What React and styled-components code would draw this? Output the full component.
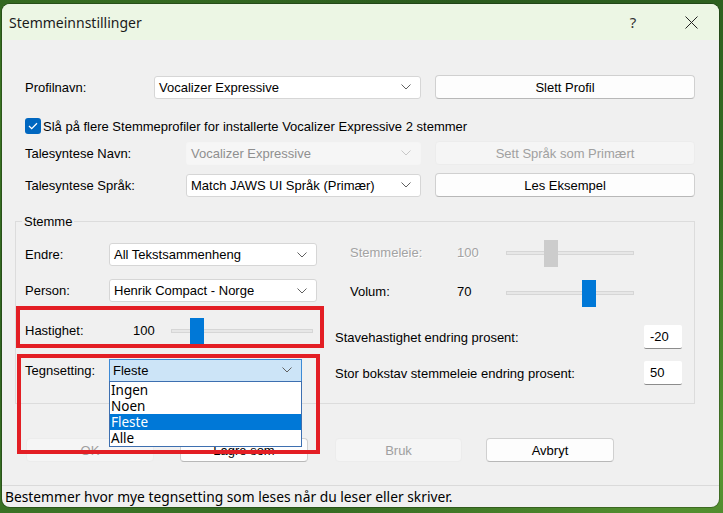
import React from 'react';
import styled, { createGlobalStyle } from 'styled-components';

const GlobalStyle = createGlobalStyle`
  html, body {
    margin: 0;
    padding: 0;
    width: 723px;
    height: 513px;
    overflow: hidden;
  }
  body {
    font-family: "Liberation Sans", Arial, sans-serif;
    font-size: 13px;
    color: #000;
  }
`;

const Desktop = styled.div`
  width: 723px;
  height: 513px;
  box-sizing: border-box;
  padding: 4px 4px 0 2px;
  background:
    radial-gradient(ellipse at 10% 20%, #3f7a25 0%, transparent 45%),
    radial-gradient(ellipse at 95% 90%, #5b9a33 0%, transparent 40%),
    linear-gradient(160deg, #24501a 0%, #2f6320 40%, #3b7426 70%, #2a5a1c 100%);
`;

const Window = styled.div`
  position: relative;
  width: 717px;
  height: 503px;
  border-radius: 8px;
  background: #f0f0f0;
  box-shadow: 0 0 0 1px rgba(0, 0, 0, 0.25);
  overflow: hidden;
  display: flex;
  flex-direction: column;
`;

const TitleBar = styled.div`
  height: 36px;
  flex: none;
  display: flex;
  align-items: center;
  padding-left: 7px;
  background: #ecf6e4;
  font-family: "Noto Sans", "Open Sans", sans-serif;
  font-size: 14px;
  color: #1a1a1a;
`;

const TitleText = styled.div`
  flex: 1;
`;

const TitleButton = styled.div`
  width: 46px;
  height: 36px;
  display: flex;
  align-items: center;
  justify-content: center;
  font-size: 15px;
  color: #333;
  margin-right: ${(p) => p.$mr || 0}px;
`;

const Content = styled.div`
  flex: 1;
  padding: 35px 0 0 23px;
  display: flex;
  flex-direction: column;
`;

const Row = styled.div`
  display: flex;
  align-items: center;
  height: 24px;
  margin-top: ${(p) => p.$mt || 0}px;
`;

const Label = styled.div`
  width: ${(p) => p.$w}px;
  flex: none;
  white-space: nowrap;
  color: ${(p) => (p.$disabled ? '#a3a3a3' : '#000')};
  text-shadow: ${(p) => (p.$disabled ? '1px 1px 0 #fff' : 'none')};
  margin-top: ${(p) => p.$lift ? -p.$lift * 2 : 0}px;
`;

const SelectBox = styled.div`
  position: relative;
  width: ${(p) => p.$w}px;
  height: 23px;
  box-sizing: border-box;
  flex: none;
  display: flex;
  align-items: center;
  padding-left: ${(p) => (p.$open ? 3 : 4)}px;
  border-radius: ${(p) => (p.$open ? 0 : 3)}px;
  border: 1px solid ${(p) => (p.$disabled ? '#f5f5f5' : p.$open ? '#3d8ad6' : '#d6d6d6')};
  background: ${(p) => (p.$disabled ? '#f6f6f6' : p.$open ? '#cce4f7' : '#fff')};
  color: ${(p) => (p.$disabled ? '#8f8f8f' : '#000')};
`;

const SelectValue = styled.div`
  flex: 1;
  white-space: nowrap;
`;

const Chevron = styled.svg`
  width: 10px;
  height: 6px;
  margin-right: 9px;
  flex: none;
`;

const Button = styled.div`
  width: ${(p) => p.$w}px;
  height: 24px;
  box-sizing: border-box;
  flex: none;
  display: flex;
  align-items: center;
  justify-content: center;
  margin-left: ${(p) => p.$ml || 0}px;
  border-radius: 4px;
  border: 1px solid ${(p) => (p.$disabled ? '#ececec' : '#d0d0d0')};
  background: ${(p) => (p.$disabled ? '#f5f5f5' : '#fdfdfd')};
  color: ${(p) => (p.$disabled ? '#a0a0a0' : '#000')};
  border-bottom-color: ${(p) => (p.$disabled ? '#ececec' : '#b8b8b8')};
`;

const CheckRow = styled.div`
  display: flex;
  align-items: center;
  gap: 2px;
  height: 16px;
  margin-top: 19px;
`;

const Checkbox = styled.div`
  width: 16px;
  height: 16px;
  border-radius: 3px;
  background: #0067c0;
  display: flex;
  align-items: center;
  justify-content: center;
`;

const Group = styled.div`
  position: relative;
  margin: 24px 0 0 -10px;
  width: 680px;
  height: 183px;
  box-sizing: border-box;
  border: 1px solid #dcdcdc;
  display: flex;
  padding: 21px 0 0 9px;
`;

const Legend = styled.div`
  position: absolute;
  top: -8px;
  left: 6px;
  padding: 0 2px;
  background: #f0f0f0;
`;

const Column = styled.div`
  width: ${(p) => (p.$w ? `${p.$w}px` : 'auto')};
  flex: none;
  display: flex;
  flex-direction: column;
`;

const FieldRow = styled.div`
  display: flex;
  align-items: center;
  height: ${(p) => p.$h}px;
  margin-top: ${(p) => p.$mt || 0}px;
  padding-left: ${(p) => p.$pl || 0}px;
`;

const Value = styled.div`
  width: ${(p) => p.$w}px;
  flex: none;
  color: ${(p) => (p.$disabled ? '#a3a3a3' : '#000')};
  text-shadow: ${(p) => (p.$disabled ? '1px 1px 0 #fff' : 'none')};
  margin-top: ${(p) => p.$lift ? -p.$lift * 2 : 0}px;
`;

const Track = styled.div`
  position: relative;
  width: ${(p) => p.$w}px;
  height: 4px;
  flex: none;
  box-sizing: border-box;
  background: #e7e7e7;
  border: 1px solid #d6d6d6;
`;

const Thumb = styled.div`
  position: absolute;
  top: -12px;
  width: 14px;
  height: 27px;
  background: ${(p) => (p.$disabled ? '#cccccc' : '#0078d7')};
`;

const NumInput = styled.div`
  width: 38px;
  height: 24px;
  box-sizing: border-box;
  flex: none;
  background: #fff;
  border-bottom: 1px solid #8c8c8c;
  border-radius: 2px;
  display: flex;
  align-items: center;
  padding-left: 6px;
`;

const ComboWrap = styled.div`
  position: relative;
`;

const DropList = styled.div`
  position: absolute;
  top: 22px;
  left: 0;
  width: 193px;
  box-sizing: border-box;
  border: 1px solid #3d6fb0;
  background: #fff;
  font-family: "Noto Sans", "Open Sans", sans-serif;
  font-size: 13.5px;
  z-index: 3;
`;

const DropItem = styled.div`
  height: 16px;
  line-height: 16px;
  padding-left: 1px;
  background: ${(p) => (p.$selected ? '#0078d7' : 'transparent')};
  color: ${(p) => (p.$selected ? '#fff' : '#000')};
`;

const ButtonRow = styled.div`
  display: flex;
  margin-top: 34px;
`;

const StatusBar = styled.div`
  height: 22px;
  flex: none;
  box-sizing: border-box;
  border-top: 1px solid #dadada;
  padding-left: 3px;
  display: flex;
  align-items: center;
  font-family: "Noto Sans", "Open Sans", sans-serif;
  font-size: 13.8px;
  color: #000;
`;

const Highlight = styled.div`
  position: absolute;
  left: ${(p) => p.$x}px;
  top: ${(p) => p.$y}px;
  width: ${(p) => p.$w}px;
  height: ${(p) => p.$h}px;
  box-sizing: border-box;
  border: 4px solid #e31e24;
  pointer-events: none;
  z-index: 2;
`;

const ChevronIcon = ({ color = '#606060' }) => (
  <Chevron viewBox="0 0 10 6">
    <polyline points="0.5,0.5 5,5 9.5,0.5" fill="none" stroke={color} strokeWidth="1" />
  </Chevron>
);

const Select = ({ w, value, disabled, open }) => (
  <SelectBox $w={w} $disabled={disabled} $open={open}>
    <SelectValue>{value}</SelectValue>
    <ChevronIcon color={disabled ? '#c8c8c8' : '#606060'} />
  </SelectBox>
);

const Slider = ({ w, pos, disabled }) => (
  <Track $w={w}>
    <Thumb $disabled={disabled} style={{ left: pos }} />
  </Track>
);

const options = ['Ingen', 'Noen', 'Fleste', 'Alle'];

export default function App() {
  return (
    <>
      <GlobalStyle />
      <Desktop>
        <Window>
          <TitleBar>
            <TitleText>Stemmeinnstillinger</TitleText>
            <TitleButton $mr={12}>?</TitleButton>
            <TitleButton $mr={5}>
              <svg width="13" height="13" viewBox="0 0 13 13">
                <path d="M0.5 0.5 L12.5 12.5 M12.5 0.5 L0.5 12.5" stroke="#222" strokeWidth="1" />
              </svg>
            </TitleButton>
          </TitleBar>

          <Content>
            <Row>
              <Label $w={129}>Profilnavn:</Label>
              <Select w={267} value="Vocalizer Expressive" />
              <Button $w={260} $ml={14}>Slett Profil</Button>
            </Row>

            <CheckRow>
              <Checkbox>
                <svg width="10" height="8" viewBox="0 0 10 8">
                  <polyline points="1,4 3.7,6.6 9,1.2" fill="none" stroke="#fff" strokeWidth="1.3" />
                </svg>
              </Checkbox>
              <span>Slå på flere Stemmeprofiler for installerte Vocalizer Expressive 2 stemmer</span>
            </CheckRow>

            <Row $mt={7}>
              <Label $w={161}>Talesyntese Navn:</Label>
              <Select w={235} value="Vocalizer Expressive" disabled />
              <Button $w={260} $ml={14} $disabled>Sett Språk som Primært</Button>
            </Row>

            <Row $mt={8}>
              <Label $w={161}>Talesyntese Språk:</Label>
              <Select w={235} value="Match JAWS UI Språk (Primær)" />
              <Button $w={260} $ml={14}>Les Eksempel</Button>
            </Row>

            <Group>
              <Legend>Stemme</Legend>
              <Column $w={310}>
                <FieldRow $h={23}>
                  <Label $w={84}>Endre:</Label>
                  <Select w={208} value="All Tekstsammenheng" />
                </FieldRow>
                <FieldRow $h={23} $mt={13}>
                  <Label $w={84}>Person:</Label>
                  <Select w={208} value="Henrik Compact - Norge" />
                </FieldRow>
                <FieldRow $h={27} $mt={15}>
                  <Label $w={108}>Hastighet:</Label>
                  <Value $w={38}>100</Value>
                  <Slider w={142} pos={18} />
                </FieldRow>
                <FieldRow $h={22} $mt={15}>
                  <Label $w={84}>Tegnsetting:</Label>
                  <ComboWrap>
                    <Select w={193} value="Fleste" open />
                    <DropList>
                      {options.map((o) => (
                        <DropItem key={o} $selected={o === 'Fleste'}>{o}</DropItem>
                      ))}
                    </DropList>
                  </ComboWrap>
                </FieldRow>
              </Column>
              <Column>
                <FieldRow $h={27} $mt={-4} $pl={15}>
                  <Label $w={107} $disabled>Stemmeleie:</Label>
                  <Value $w={49} $disabled>100</Value>
                  <Slider w={128} pos={37} disabled />
                </FieldRow>
                <FieldRow $h={27} $mt={13} $pl={15}>
                  <Label $w={107} $lift={1}>Volum:</Label>
                  <Value $w={49} $lift={1}>70</Value>
                  <Slider w={128} pos={75} />
                </FieldRow>
                <FieldRow $h={24} $mt={19}>
                  <Label $w={309}>Stavehastighet endring prosent:</Label>
                  <NumInput>-20</NumInput>
                </FieldRow>
                <FieldRow $h={24} $mt={12}>
                  <Label $w={309}>Stor bokstav stemmeleie endring prosent:</Label>
                  <NumInput>50</NumInput>
                </FieldRow>
              </Column>
            </Group>

            <ButtonRow>
              <Button $w={128} $ml={1} $disabled>OK</Button>
              <Button $w={128} $ml={26}>Lagre som</Button>
              <Button $w={127} $ml={27} $disabled>Bruk</Button>
              <Button $w={128} $ml={24}>Avbryt</Button>
            </ButtonRow>
          </Content>

          <StatusBar>Bestemmer hvor mye tegnsetting som leses når du leser eller skriver.</StatusBar>

          <Highlight $x={14} $y={302} $w={308} $h={42} />
          <Highlight $x={15} $y={350} $w={303} $h={100} />
        </Window>
      </Desktop>
    </>
  );
}
